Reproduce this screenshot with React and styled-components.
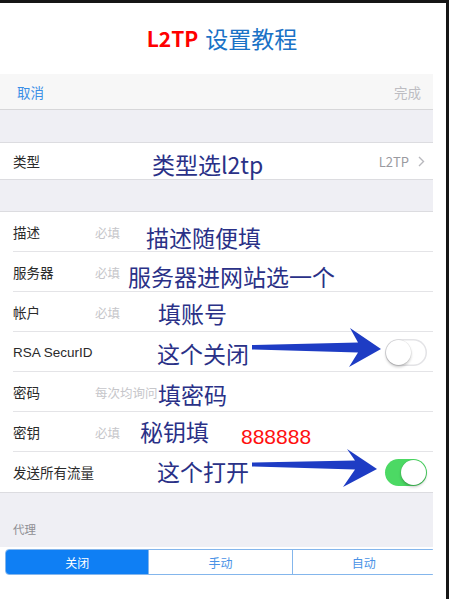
import React from "react";
import styled, { createGlobalStyle } from "styled-components";

const Global = createGlobalStyle`
  html, body { margin: 0; padding: 0; background: #fff; }
  body { font-family: "Noto Sans CJK SC", "Noto Sans", sans-serif; }
  * { box-sizing: border-box; }
`;

const Frame = styled.div`
  width: 449px;
  height: 599px;
  background: #fff;
  border-top: 3px solid #161616;
  border-right: 3px solid #161616;
  overflow: hidden;
`;

const Title = styled.div`
  height: 71px;
  display: flex;
  align-items: center;
  justify-content: center;
  gap: 7px;
  padding-right: 2px;
  font-size: 23px;
  line-height: 1;
  color: #1a72c6;
  font-family: "Noto Sans CJK SC", sans-serif;
`;

const TitleRed = styled.span`
  color: #ff0000;
  font-weight: 700;
  font-size: 21px;
`;

const Phone = styled.div`
  width: 433px;
  background: #efeff4;
  overflow: hidden;
  font-family: "Noto Sans CJK SC", sans-serif;
`;

const Nav = styled.div`
  height: 36px;
  background: #f7f7f7;
  border-bottom: 1px solid #d7d7d9;
  display: flex;
  align-items: center;
  justify-content: space-between;
  padding: 0 12px 0 17px;
  font-size: 13.5px;
`;

const NavBtn = styled.span`
  color: ${(p) => (p.$muted ? "#bdbdc2" : "#3a8ee6")};
`;

const Gap = styled.div`
  height: ${(p) => p.$h}px;
`;

const Group = styled.div`
  background: #fff;
  border-top: 1px solid #dcdce0;
  border-bottom: 1px solid #dcdce0;
`;

const Row = styled.div`
  position: relative;
  height: ${(p) => p.$h || 40}px;
  display: flex;
  align-items: center;
  padding-left: 13px;
  &:not(:last-child)::after {
    content: "";
    position: absolute;
    left: 13px;
    right: 0;
    bottom: 0;
    height: 1px;
    background: #e4e4e7;
  }
`;

const Label = styled.span`
  width: 82px;
  flex: none;
  font-size: 13.5px;
  color: #2a2a2a;
  font-family: ${(p) =>
    p.$latin ? '"Liberation Sans", "Noto Sans CJK SC", sans-serif' : '"Noto Sans CJK SC", sans-serif'};
  white-space: nowrap;
`;

const Placeholder = styled.span`
  font-size: 12.5px;
  color: #c6c6ca;
  white-space: nowrap;
`;

const Value = styled.span`
  margin-left: auto;
  margin-right: 8px;
  display: flex;
  align-items: center;
  gap: 9px;
  font-size: 13px;
  color: #9a9aa0;
`;

const Note = styled.span`
  position: absolute;
  left: ${(p) => p.$x}px;
  top: 50%;
  transform: translateY(calc(-50% + ${(p) => p.$dy || 0}px));
  font-size: 23px;
  line-height: 1;
  color: #2a3187;
  white-space: nowrap;
  font-family: "Noto Sans CJK SC", sans-serif;
  z-index: 2;
`;

const RedNote = styled(Note)`
  font-family: "Liberation Sans", Arial, sans-serif;
  font-size: 21px;
  color: #ff1010;
  background: #fff;
  padding: 2px 3px;
`;

const ArrowSvg = styled.svg`
  position: absolute;
  left: 252px;
  top: ${(p) => p.$top}px;
  z-index: 2;
`;

const Switch = styled.span`
  margin-left: auto;
  margin-right: 6px;
  width: 42px;
  height: 27px;
  border-radius: 14px;
  position: relative;
  background: ${(p) => (p.$on ? "#4cd964" : "#fff")};
  box-shadow: ${(p) => (p.$on ? "none" : "inset 0 0 0 1.5px #e3e3e6")};
  &::after {
    content: "";
    position: absolute;
    top: 1px;
    left: ${(p) => (p.$on ? "16px" : "1px")};
    width: 25px;
    height: 25px;
    border-radius: 50%;
    background: #fff;
    box-shadow: 0 2px 3px rgba(0, 0, 0, 0.22), 0 0 0 0.5px rgba(0, 0, 0, 0.08);
  }
`;

const Footer = styled.div`
  height: 54px;
  padding: 29px 0 0 13px;
  font-size: 11.5px;
  line-height: 14px;
  color: #8e8e93;
`;

const SegmentWrap = styled.div`
  background: #fff;
  padding: 2px 0 2px 5px;
`;

const Segment = styled.div`
  width: 431px;
  height: 26px;
  display: flex;
  border: 1px solid #84b6ec;
  border-radius: 4px;
  overflow: hidden;
`;

const SegItem = styled.div`
  flex: 1;
  display: flex;
  align-items: center;
  justify-content: center;
  font-size: 12px;
  background: ${(p) => (p.$active ? "#0f7ff4" : "#fff")};
  color: ${(p) => (p.$active ? "#fff" : "#4a92e6")};
  & + & {
    border-left: 1px solid #84b6ec;
  }
`;

const Chevron = () => (
  <svg width="7" height="11" viewBox="0 0 7 11">
    <path d="M1 1l4.5 4.5L1 10" fill="none" stroke="#b8b8bd" strokeWidth="1.4" />
  </svg>
);

const Arrow = ({ top, d }) => (
  <ArrowSvg $top={top} width="132" height="42" viewBox="0 0 132 42">
    <path d={d} fill="#1e3cc4" />
  </ArrowSvg>
);

export default function App() {
  return (
    <>
      <Global />
      <Frame>
        <Title>
          <TitleRed>L2TP</TitleRed>
          <span>设置教程</span>
        </Title>
        <Phone>
          <Nav>
            <NavBtn>取消</NavBtn>
            <NavBtn $muted>完成</NavBtn>
          </Nav>
          <Gap $h={32} />
          <Group>
            <Row $h={36}>
              <Label>类型</Label>
              <Note $x={152} $dy={3}>类型选l2tp</Note>
              <Value>
                L2TP
                <Chevron />
              </Value>
            </Row>
          </Group>
          <Gap $h={31} />
          <Group>
            <Row>
              <Label>描述</Label>
              <Placeholder>必填</Placeholder>
              <Note $x={146} $dy={5}>描述随便填</Note>
            </Row>
            <Row>
              <Label>服务器</Label>
              <Placeholder>必填</Placeholder>
              <Note $x={128} $dy={4}>服务器进网站选一个</Note>
            </Row>
            <Row>
              <Label>帐户</Label>
              <Placeholder>必填</Placeholder>
              <Note $x={158} $dy={1}>填账号</Note>
            </Row>
            <Row>
              <Label $latin>RSA SecurID</Label>
              <Note $x={157} $dy={1}>这个关闭</Note>
              <Arrow
                top={-4}
                d="M0 17 L106 14.5 L98 0 L129 21 L97 39 L106 24.5 L0 21.5 Z"
              />
              <Switch />
            </Row>
            <Row>
              <Label>密码</Label>
              <Placeholder>每次均询问</Placeholder>
              <Note $x={158} $dy={2}>填密码</Note>
            </Row>
            <Row>
              <Label>密钥</Label>
              <Placeholder>必填</Placeholder>
              <Note $x={140} $dy={-1}>秘钥填</Note>
              <RedNote $x={238} $dy={4}>888888</RedNote>
            </Row>
            <Row>
              <Label>发送所有流量</Label>
              <Note $x={157} $dy={-1}>这个打开</Note>
              <Arrow
                top={-3}
                d="M0 13.5 L103 11.5 L95 0 L125 20 L91 38 L103 20.5 L0 17.5 Z"
              />
              <Switch $on />
            </Row>
          </Group>
          <Footer>代理</Footer>
          <SegmentWrap>
            <Segment>
              <SegItem $active>关闭</SegItem>
              <SegItem>手动</SegItem>
              <SegItem>自动</SegItem>
            </Segment>
          </SegmentWrap>
        </Phone>
      </Frame>
    </>
  );
}
